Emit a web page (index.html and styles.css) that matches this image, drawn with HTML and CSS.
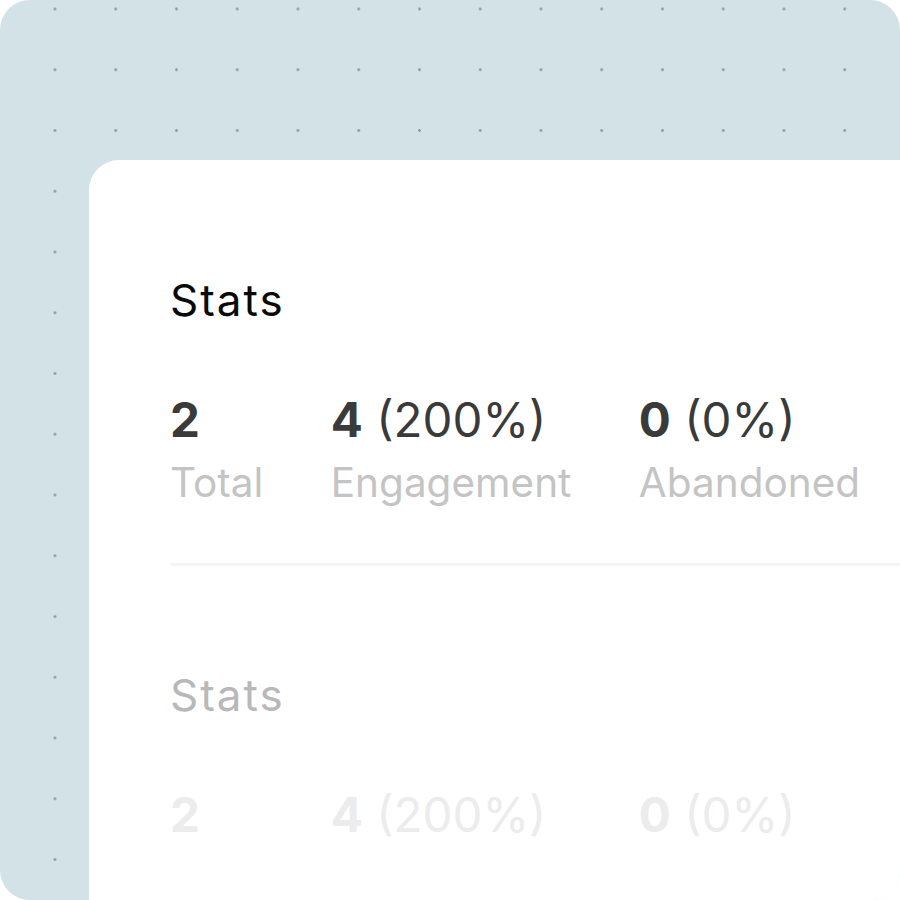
FILE: index.html
```html
<!DOCTYPE html>
<html>
<head>
<meta charset="utf-8">
<link rel="stylesheet" href="styles.css">
</head>
<body>
<div class="panel">
  <div class="card">
    <section class="block">
      <h2 class="title">Stats</h2>
      <div class="stats">
        <div class="stat"><div class="value"><b>2</b></div><div class="label">Total</div></div>
        <div class="stat"><div class="value"><b>4</b> (200%)</div><div class="label">Engagement</div></div>
        <div class="stat"><div class="value"><b>0</b> (0%)</div><div class="label">Abandoned</div></div>
      </div>
    </section>
    <div class="divider"></div>
    <section class="block faded">
      <h2 class="title">Stats</h2>
      <div class="stats">
        <div class="stat"><div class="value"><b>2</b></div><div class="label">Total</div></div>
        <div class="stat"><div class="value"><b>4</b> (200%)</div><div class="label">Engagement</div></div>
        <div class="stat"><div class="value"><b>0</b> (0%)</div><div class="label">Abandoned</div></div>
      </div>
    </section>
    <div class="fade"></div>
  </div>
</div>
</body>
</html>
```
FILE: styles.css
```css
html, body { margin: 0; padding: 0; background: #fff; }
body { width: 900px; height: 900px; overflow: hidden; font-family: Inter, "Noto Sans", sans-serif; }
.panel {
  width: 900px; height: 900px; box-sizing: border-box;
  background-color: #d3e2e7;
  background-image: radial-gradient(circle, #8d9ba4 1.1px, transparent 1.6px);
  background-size: 60.75px 60.75px;
  background-position: 24.6px -21.4px;
  border-radius: 30px;
  padding: 160px 0 0 89px;
  overflow: hidden;
}
.card {
  position: relative;
  background: #fff;
  height: 740px;
  border-top-left-radius: 30px;
  padding: 0 0 0 81px;
  overflow: hidden;
}
.block { padding-top: 114px; }
.title { margin: 0; font-weight: 400; font-size: 44px; line-height: 52px; color: #0a0a0a; letter-spacing: 2px; }
.stats { display: flex; gap: 67.5px; margin-top: 66px; }
.value { font-size: 47.5px; line-height: 56px; color: #3a3a3a; }
.value b { font-weight: 700; }
.label { font-size: 40.5px; line-height: 56px; margin-top: 7px; color: #c4c4c4; }
.divider { height: 3px; background: #f3f6f6; margin-top: 52px; }
.faded { padding-top: 103px; }
.faded .title { color: #b8b8b8; }
.faded .value { color: #ececec; }
.faded .label { color: #fafafa; }
.fade { position: absolute; left: 0; right: 0; bottom: 0; height: 60px; background: linear-gradient(rgba(255,255,255,0), #fff 35%); }
```
